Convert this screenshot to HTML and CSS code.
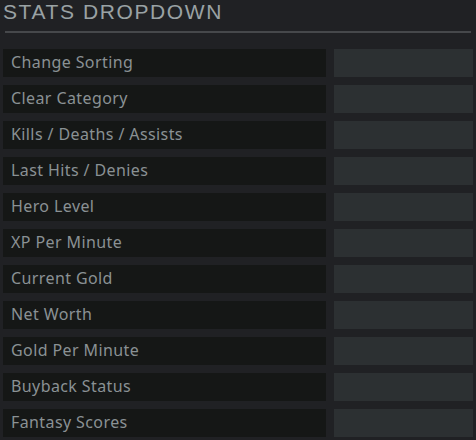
FILE: index.html
```html
<!DOCTYPE html>
<html>
<head>
<meta charset="utf-8">
<link rel="stylesheet" href="styles.css">
</head>
<body>
<div class="panel">
  <h1 class="title">STATS DROPDOWN</h1>
  <div class="rule"></div>
  <div class="rows">
    <div class="row"><div class="label">Change Sorting</div><div class="slot"></div></div>
    <div class="row"><div class="label">Clear Category</div><div class="slot"></div></div>
    <div class="row"><div class="label">Kills / Deaths / Assists</div><div class="slot"></div></div>
    <div class="row"><div class="label">Last Hits / Denies</div><div class="slot"></div></div>
    <div class="row"><div class="label">Hero Level</div><div class="slot"></div></div>
    <div class="row"><div class="label">XP Per Minute</div><div class="slot"></div></div>
    <div class="row"><div class="label">Current Gold</div><div class="slot"></div></div>
    <div class="row"><div class="label">Net Worth</div><div class="slot"></div></div>
    <div class="row"><div class="label">Gold Per Minute</div><div class="slot"></div></div>
    <div class="row"><div class="label">Buyback Status</div><div class="slot"></div></div>
    <div class="row"><div class="label">Fantasy Scores</div><div class="slot"></div></div>
  </div>
</div>
</body>
</html>
```
FILE: styles.css
```css
html, body {
  margin: 0;
  padding: 0;
  background: #202124;
  width: 476px;
  height: 440px;
  overflow: hidden;
}
.panel {
  padding: 0 3px 0 3px;
  font-family: "Noto Sans", "DejaVu Sans", sans-serif;
}
.title {
  margin: 0;
  padding-left: 0;
  height: 31px;
  font-family: "Liberation Sans", Arial, sans-serif;
  font-size: 21px;
  line-height: 24px;
  font-weight: 400;
  letter-spacing: 1.6px;
  color: #9aa2a4;
  white-space: nowrap;
}
.rule {
  margin-left: 2px;
  width: 466px;
  height: 2px;
  background: #46484b;
}
.rows {
  margin-top: 16px;
  display: flex;
  flex-direction: column;
  gap: 8px;
}
.row {
  display: grid;
  grid-template-columns: 323px 139px;
  column-gap: 8px;
  height: 28px;
}
.label {
  background: #151716;
  color: #8a9194;
  font-size: 16px;
  line-height: 26px;
  letter-spacing: 0.4px;
  padding-left: 8px;
  white-space: nowrap;
}
.slot {
  background: #2c3032;
}
```
